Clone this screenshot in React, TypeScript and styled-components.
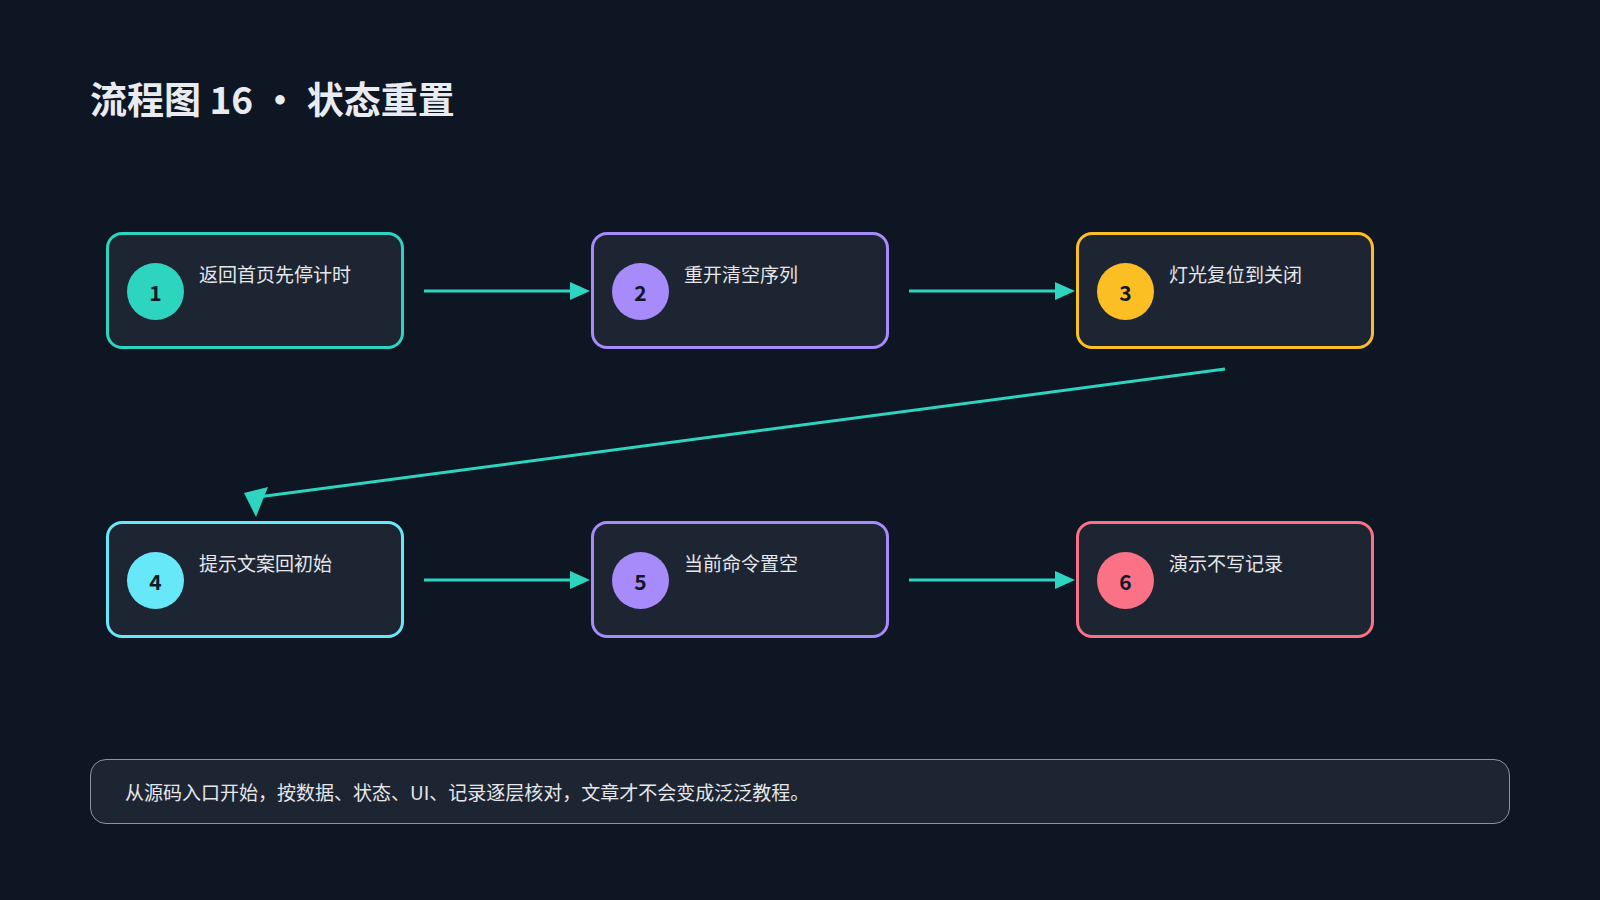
import React from "react";
import styled, { createGlobalStyle } from "styled-components";

const Global = createGlobalStyle`
  html, body { margin: 0; background: #0f1623; }
  body { font-family: "Noto Sans CJK SC", "Noto Sans", sans-serif; }
`;

const Page = styled.div`
  width: 1600px;
  height: 900px;
  box-sizing: border-box;
  padding: 72px 90px 0 90px;
  display: flex;
  flex-direction: column;
`;

const Title = styled.h1`
  margin: 0;
  font-size: 37px;
  font-weight: 700;
  color: #e8ebf0;
  line-height: 52px;
`;

const Diagram = styled.div`
  margin: 108px 0 0 16px;
  display: flex;
  flex-direction: column;
`;

const Row = styled.div`
  display: flex;
  align-items: center;
`;

const Box = styled.div<{ $c: string }>`
  width: 298px;
  height: 117px;
  box-sizing: border-box;
  border: 3px solid ${(p) => p.$c};
  border-radius: 16px;
  background: #1e2532;
  display: flex;
  align-items: flex-start;
  padding: 26px 18px 0 18px;
  gap: 15px;
`;

const Dot = styled.div<{ $c: string }>`
  width: 57px;
  height: 57px;
  border-radius: 50%;
  background: ${(p) => p.$c};
  color: #111827;
  font-size: 21px;
  font-weight: 700;
  display: flex;
  align-items: center;
  justify-content: center;
  flex: none;
  margin-top: 2px;
`;

const Label = styled.div`
  color: #e5e7eb;
  font-size: 19px;
  line-height: 26px;
`;

const Gap = styled.div`
  width: 187px;
  height: 20px;
  display: flex;
  align-items: center;
`;

const Footer = styled.div`
  margin-top: 121px;
  height: 65px;
  box-sizing: border-box;
  border: 1px solid #8b93a1;
  border-radius: 16px;
  background: #1e2532;
  display: flex;
  align-items: center;
  padding: 0 34px;
  color: #e5e7eb;
  font-size: 19px;
`;

const TEAL = "#2dd4bf";

const Arrow = () => (
  <Gap>
    <svg width="187" height="20" viewBox="0 0 187 20">
      <line x1="20" y1="10" x2="168" y2="10" stroke={TEAL} strokeWidth="3" />
      <polygon points="166,1 186,10 166,19" fill={TEAL} />
    </svg>
  </Gap>
);

type Step = { n: number; t: string; c: string };
const row1: Step[] = [
  { n: 1, t: "返回首页先停计时", c: "#2dd4bf" },
  { n: 2, t: "重开清空序列", c: "#a78bfa" },
  { n: 3, t: "灯光复位到关闭", c: "#fbbf24" },
];
const row2: Step[] = [
  { n: 4, t: "提示文案回初始", c: "#67e8f9" },
  { n: 5, t: "当前命令置空", c: "#a78bfa" },
  { n: 6, t: "演示不写记录", c: "#fb7185" },
];

const StepRow = ({ steps }: { steps: Step[] }) => (
  <Row>
    {steps.map((s, i) => (
      <React.Fragment key={s.n}>
        {i > 0 && <Arrow />}
        <Box $c={s.c}>
          <Dot $c={s.c}>{s.n}</Dot>
          <Label>{s.t}</Label>
        </Box>
      </React.Fragment>
    ))}
  </Row>
);

export default function App() {
  return (
    <>
      <Global />
      <Page>
        <Title>流程图 16 • 状态重置</Title>
        <Diagram>
          <StepRow steps={row1} />
          <svg width="1270" height="172" viewBox="0 0 1270 172" style={{ display: "block" }}>
            <line x1="1119" y1="20" x2="152" y2="148" stroke={TEAL} strokeWidth="3" />
            <polygon points="138,144 162,138 150,168" fill={TEAL} />
          </svg>
          <StepRow steps={row2} />
        </Diagram>
        <Footer>从源码入口开始，按数据、状态、UI、记录逐层核对，文章才不会变成泛泛教程。</Footer>
      </Page>
    </>
  );
}
